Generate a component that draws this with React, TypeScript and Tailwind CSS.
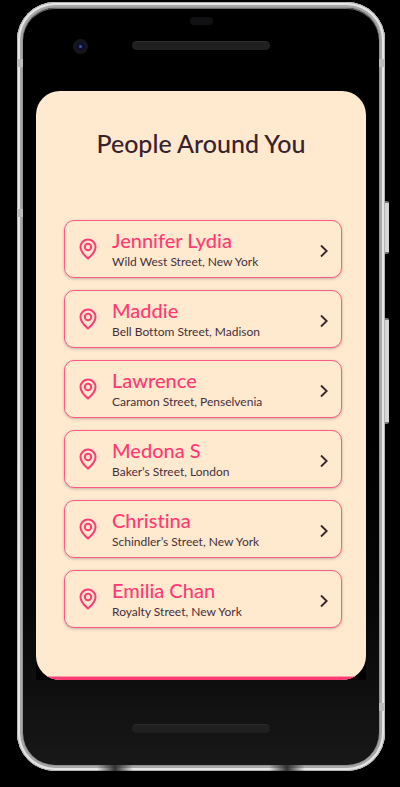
const people = [
  { name: "Jennifer Lydia", address: "Wild West Street, New York" },
  { name: "Maddie", address: "Bell Bottom Street, Madison" },
  { name: "Lawrence", address: "Caramon Street, Penselvenia" },
  { name: "Medona S", address: "Baker’s Street, London" },
  { name: "Christina", address: "Schindler’s Street, New York" },
  { name: "Emilia Chan", address: "Royalty Street, New York" },
];

function PinIcon() {
  return (
    <svg viewBox="0 0 18 22" className="h-[22px] w-[18px] shrink-0" fill="none" stroke="#ff3b74" strokeWidth="2" strokeLinejoin="round" aria-hidden="true">
      <path d="M9 20.6C8 19.6 1.5 14.6 1.5 9a7.5 7.5 0 0 1 15 0c0 5.6-6.500 10.600-7.500 11.600Z" />
      <circle cx="9" cy="9" r="3.200" />
    </svg>
  );
}

function ChevronIcon() {
  return (
    <svg viewBox="0 0 8 14" className="mt-1 h-3.5 w-2 shrink-0" fill="none" stroke="#3a222d" strokeWidth="1.8" aria-hidden="true">
      <path d="M1 1.500 6.700 7 1 12.500" />
    </svg>
  );
}

function PersonCard({ name, address }: { name: string; address: string }) {
  return (
    <li>
      <button
        type="button"
        className="flex w-full items-center rounded-[10px] border border-[#ff5a87] bg-[#ffead0] py-[7px] pr-[13px] pl-3.5 text-left shadow-[0_1px_3px_rgba(58,34,45,0.3)]"
      >
        <PinIcon />
        <span className="ml-[15px] flex min-w-0 flex-1 flex-col gap-0.5">
          <span className="text-[20px] leading-6 font-medium whitespace-nowrap text-[#ff3b74]">{name}</span>
          <span className="text-[12px] leading-4 whitespace-nowrap text-[#462f38]">{address}</span>
        </span>
        <ChevronIcon />
      </button>
    </li>
  );
}

function Speaker() {
  return <div className="h-[9px] w-[138px] rounded-full border-t border-[#2c2c2c] bg-[#202020]" />;
}

function Camera() {
  return (
    <div className="flex size-[15px] items-center justify-center rounded-full bg-[#16161a]">
      <div className="flex size-[9px] items-center justify-center rounded-full bg-[#0d1030]">
        <div className="size-[3px] rounded-full bg-[#40578c]" />
      </div>
    </div>
  );
}

function Seam() {
  return <div className="h-2 w-1.5 bg-[#bcbcbc]" />;
}

function Glint() {
  return <div className="h-1.5 w-9 bg-linear-to-r from-transparent via-[#333] to-transparent" />;
}

function FrameDetails() {
  return (
    <div aria-hidden="true">
      <div className="absolute inset-y-0 left-0 flex flex-col gap-[142px] pt-[57px]">
        <Seam />
        <Seam />
      </div>
      <div className="absolute inset-y-0 right-0 flex flex-col justify-between pt-[57px] pb-[60px]">
        <Seam />
        <Seam />
      </div>
      <div className="absolute inset-x-0 bottom-0 flex justify-between px-20">
        <Glint />
        <Glint />
      </div>
      <div className="absolute inset-y-0 left-full flex flex-col gap-16 pt-[199px]">
        <div className="h-[53px] w-1 rounded-r-xs border-y-2 border-[#777] bg-[#d6d6d8]" />
        <div className="h-[106px] w-1 rounded-r-xs border-y-2 border-[#777] bg-[#d6d6d8]" />
      </div>
    </div>
  );
}

export default function App() {
  return (
    <div className="min-h-screen bg-black pt-0.5 pr-[15px] pb-4 pl-[17px] font-['Lato','Noto_Sans',sans-serif] [font-variant-ligatures:none]">
      <div className="relative rounded-[38px] bg-[#929393] p-1.5 shadow-[inset_0_0_0_1px_#b4b4b4,inset_0_0_0_3px_#e6e6e6,inset_0_0_0_5px_#a6a7a7]">
        <FrameDetails />
        <div className="relative rounded-[32px] bg-linear-to-b from-black from-40% via-[#0b0b0b] via-85% to-[#181818] px-[13px] shadow-[inset_0_1px_0_0_#6b6b6b]">
          <div className="grid h-[83px] grid-cols-[1fr_auto_1fr]">
            <div className="pt-[31px] pl-[37px]">
              <Camera />
            </div>
            <div className="flex flex-col items-center gap-4 pt-[9px]">
              <div className="h-2 w-[23px] rounded-full bg-[#111114]" />
              <Speaker />
            </div>
          </div>
          <div className="bg-black">
            <main className="overflow-hidden rounded-[24px] bg-[#ffead0]">
              <h1 className="pt-9 text-center text-[25px] leading-8 font-medium whitespace-nowrap text-[#3a222d]">People Around You</h1>
              <ul className="mt-[61px] flex flex-col gap-3 pr-6 pb-12 pl-7">
                {people.map((person) => (
                  <PersonCard key={person.name} name={person.name} address={person.address} />
                ))}
              </ul>
              <div className="h-1 border-t border-[#ff9aa9] bg-[#ff3b74]" />
            </main>
          </div>
          <div className="flex h-[85px] items-center justify-center pt-3">
            <Speaker />
          </div>
        </div>
      </div>
    </div>
  );
}
